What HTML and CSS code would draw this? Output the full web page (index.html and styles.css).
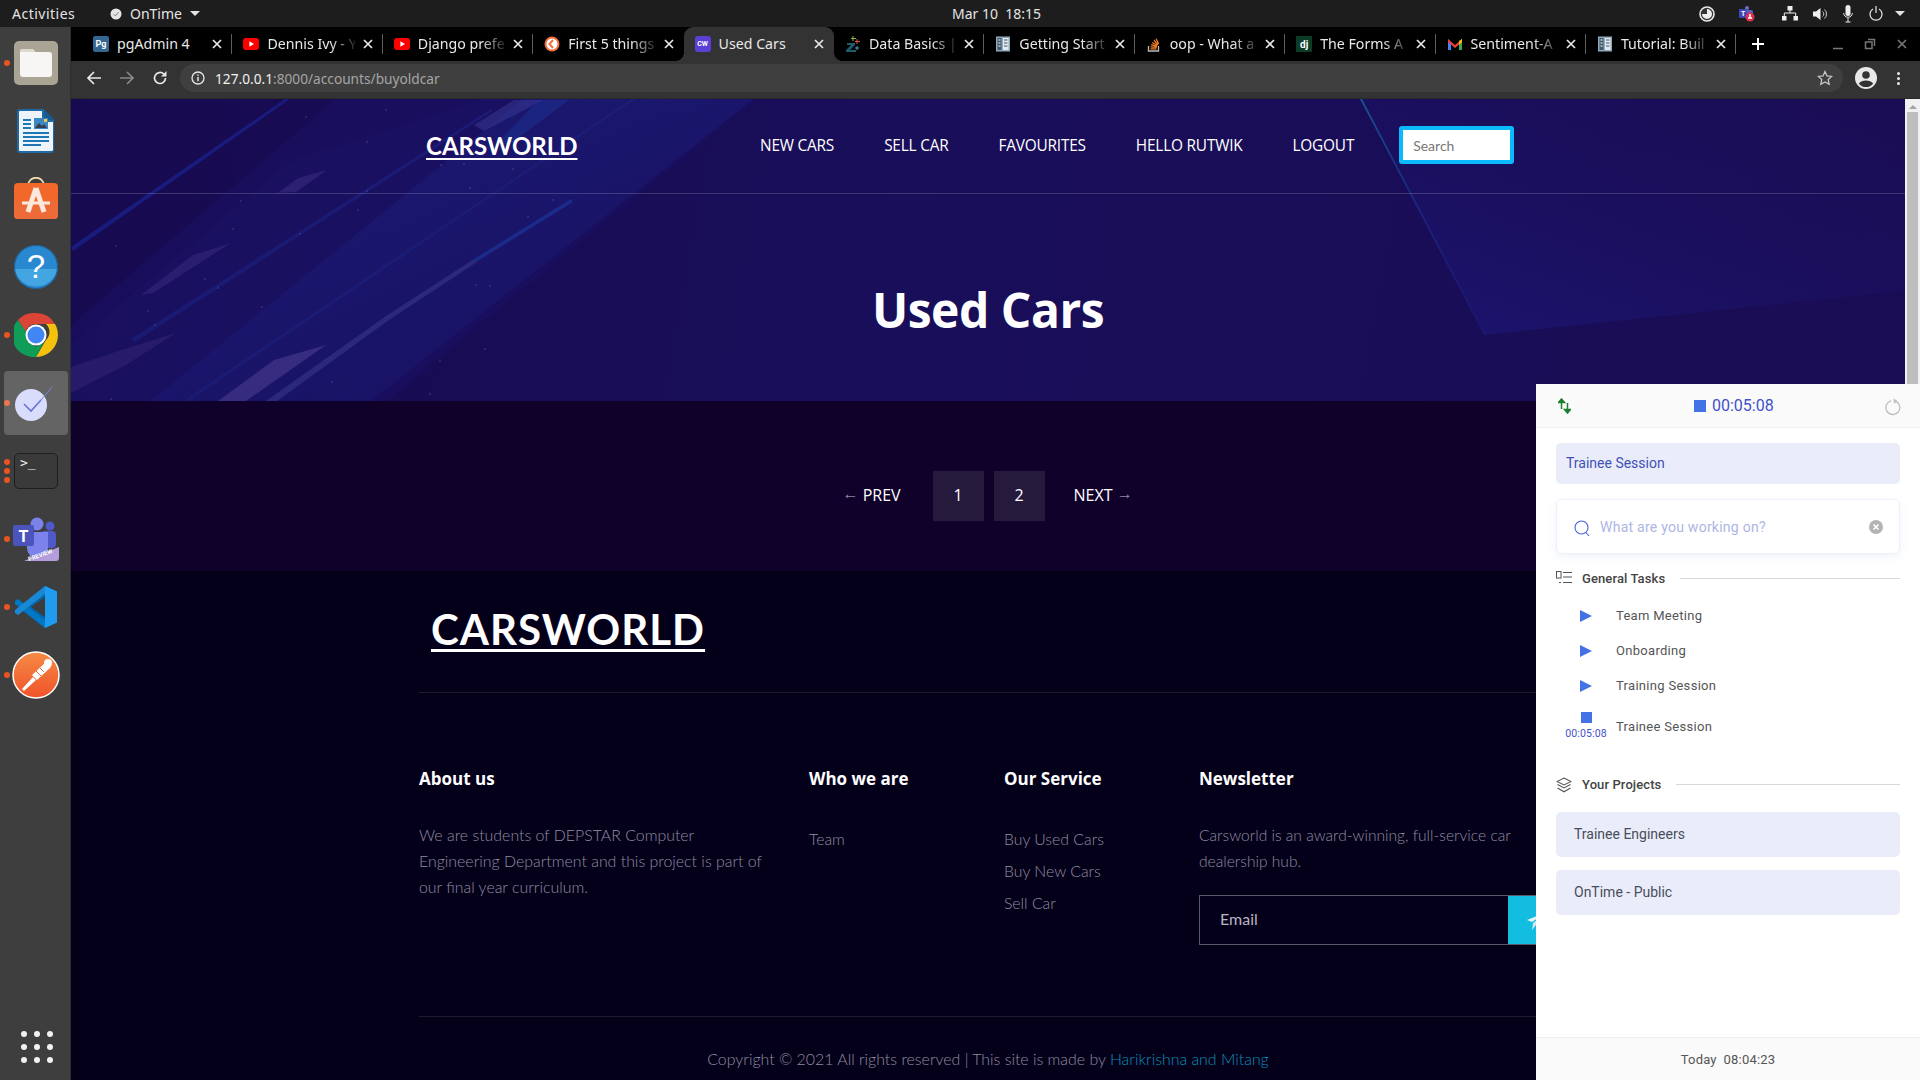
FILE: index.html
```html
<!DOCTYPE html>
<html lang="en">
<head>
  <meta charset="UTF-8">
  <title>Used Cars</title>
  <link rel="stylesheet" href="styles.css">
</head>
<body>
<svg class="sprites" width="0" height="0">
  <symbol id="yt" viewBox="0 0 16 16"><rect x="0" y="2" width="16" height="12" rx="3" fill="#f00"/><path d="M6.4 5.2 11 8l-4.6 2.8z" fill="#fff"/></symbol>
  <symbol id="docs" viewBox="0 0 16 16"><rect x="1" y="0.5" width="14" height="15" fill="#8fa9bb"/><rect x="2.5" y="2" width="4" height="12" fill="#40586a"/><rect x="8" y="2" width="5.5" height="12" fill="#e4ebf0"/><path d="M3.5 4h2M3.5 7h2M3.5 10h2" stroke="#fff" stroke-width="1.2"/><path d="M9 4h3.5M9 7h3.5M9 10h3.5" stroke="#40586a" stroke-width="1.2"/></symbol>
  <symbol id="close" viewBox="0 0 10 10"><path d="M1 1l8 8M9 1l-8 8" stroke="#e8e8e8" stroke-width="1.7" fill="none"/></symbol>
  <symbol id="play" viewBox="0 0 12 12"><path d="M0 0l12 6-12 6z" fill="#4272e4"/></symbol>
</svg>

<div class="desktop">
  <header class="topbar">
    <div class="topbar-left">
      <span class="activities">Activities</span>
      <span class="app-menu">
        <svg width="12" height="12" viewBox="0 0 12 12"><circle cx="6" cy="6" r="5.5" fill="#e6e6e6"/><path d="M3.5 6l2 2 3-4" stroke="#888" fill="none"/></svg>
        OnTime
        <i class="caret"></i>
      </span>
    </div>
    <span class="clock">Mar 10&nbsp; 18:15</span>
    <div class="tray">
      <svg class="tray-clock" width="16" height="16" viewBox="0 0 16 16"><circle cx="8" cy="8" r="7" fill="#333" stroke="#e8e8e8" stroke-width="1.6"/><path d="M8 3a5 5 0 1 1-5 5h5z" fill="#eee"/></svg>
      <svg class="tray-teams" width="18" height="18" viewBox="0 0 18 18"><circle cx="9" cy="3" r="2" fill="#6c71c4"/><rect x="7" y="5" width="8" height="8" rx="2" fill="#5b5fc7"/><rect x="1" y="4" width="8" height="9" rx="1" fill="#3f46b8"/><text x="3" y="11" class="tray-t">T</text><circle cx="12" cy="12" r="4.5" fill="#d9304c"/><path d="M12 9v4M10 13h4" stroke="#fff" stroke-width="1.6"/></svg>
      <svg class="tray-net" width="16" height="15" viewBox="0 0 16 15"><rect x="5.5" y="0" width="5" height="4.5" fill="#eee"/><rect x="0" y="10" width="4.5" height="4.5" fill="#eee"/><rect x="11.5" y="10" width="4.5" height="4.5" fill="#eee"/><path d="M8 4v3M2.3 10V7h11.4v3" stroke="#eee" fill="none"/></svg>
      <svg class="tray-vol" width="15" height="14" viewBox="0 0 15 14"><path d="M0 4.5h3L7.5 1v12L3 9.500H0z" fill="#eee"/><path d="M9.500 4.500a3 3 0 0 1 0 5M11.500 2.500a6 6 0 0 1 0 9" stroke="#ccc" fill="none"/></svg>
      <svg class="tray-mic" width="10" height="18" viewBox="0 0 10 18"><rect x="2.500" y="0" width="5" height="11" rx="2.500" fill="#eee"/><path d="M0.700 8a4.300 4.300 0 0 0 8.600 0M5 13v4M2.500 17h5" stroke="#eee" fill="none"/></svg>
      <svg class="tray-power" width="14" height="15" viewBox="0 0 14 15"><path d="M4 3a6 6 0 1 0 6 0M7 0v7" stroke="#e8e8e8" stroke-width="1.200" fill="none"/></svg>
      <i class="caret"></i>
    </div>
  </header>

  <div class="workspace">
    <nav class="dock">
      <div class="dock-item running">
        <svg width="44" height="44" viewBox="0 0 44 44"><rect width="44" height="44" rx="5" fill="#a9a494"/><path d="M6 11q0-3 3-3h9q2 0 3 3h14q3 0 3 3v19q0 3-3 3H9q-3 0-3-3z" fill="#f7f6f4"/><path d="M6 11q0-3 3-3h9q2 0 3 3z" fill="#dcd9d1"/></svg>
      </div>
      <div class="dock-item">
        <svg width="38" height="44" viewBox="0 0 38 44"><path d="M3 0h23l11 11v30q0 3-3 3H3q-3 0-3-3V3q0-3 3-3z" fill="#1f6aa5"/><path d="M3 2h22v11h11v28q0 1-2 1H3q-1 0-1-1V3q0-1 1-1z" fill="#eef5fa"/><path d="M27 0l11 11H27z" fill="#175a8f"/><path d="M6 11h8M6 15h8M6 19h8M6 24h26M6 28h26M6 32h26M6 36h18" stroke="#1f78b4" stroke-width="1.800"/><rect x="17" y="9" width="14" height="11" fill="#3a87c2"/><path d="M18 19l4-5 3 3 2-2 3 4z" fill="#333d4b"/><rect x="27" y="10" width="3" height="3" fill="#f5c542"/></svg>
      </div>
      <div class="dock-item">
        <svg width="44" height="44" viewBox="0 0 44 44"><path d="M14 9c0-11 16-11 16 0" stroke="#f0d9a8" stroke-width="1.800" fill="none"/><rect y="6" width="44" height="36" rx="4" fill="#f2682a"/><rect y="24" width="44" height="18" rx="4" fill="#ec6b37"/><path d="M22 11l8 24M22 11l-8 24" stroke="#fde8dc" stroke-width="5" fill="none"/><path d="M8 26h28" stroke="#fde8dc" stroke-width="3"/></svg>
      </div>
      <div class="dock-item">
        <svg width="44" height="44" viewBox="0 0 44 44"><circle cx="22" cy="22" r="22" fill="#2a88d0"/><path d="M0.500 24h43a22 22 0 0 1-43 0z" fill="#43a5e2"/><circle cx="22" cy="22" r="21.500" fill="none" stroke="#1c5f94"/><text x="22" y="33" text-anchor="middle" class="help-mark">?</text></svg>
      </div>
      <div class="dock-item running">
        <svg width="44" height="44" viewBox="0 0 44 44"><path d="M22 0a22 22 0 0 1 19 11H22a11 11 0 0 0-10.500 7.500L4 7a22 22 0 0 1 18-7z" fill="#db4437"/><path d="M41 11a22 22 0 0 1-19 33l10-17a11 11 0 0 0 0-16z" fill="#f4c20d"/><path d="M4 7l8 12 1 9 9 6 9-7-9 17A22 22 0 0 1 4 7z" fill="#0f9d58"/><circle cx="22" cy="22" r="10.500" fill="#fff"/><circle cx="22" cy="22" r="8.500" fill="#4285f4"/></svg>
      </div>
      <div class="dock-item running active">
        <svg width="44" height="44" viewBox="0 0 44 44"><circle cx="20" cy="24" r="16" fill="#d9dcfb"/><path d="M13 23l7 7 10-11" stroke="#6874d6" stroke-width="1.600" fill="none"/><path d="M30 19l11-13" stroke="#7a84d8" stroke-width="1" fill="none"/></svg>
      </div>
      <div class="dock-item running triple">
        <div class="terminal-icon">&gt;_</div>
      </div>
      <div class="dock-item running">
        <svg width="46" height="44" viewBox="0 0 46 44"><circle cx="24" cy="7" r="6.500" fill="#7b83eb"/><circle cx="37" cy="9" r="4.500" fill="#5059c9"/><rect x="28" y="14" width="15" height="17" rx="4" fill="#5059c9"/><path d="M14 15h21v16a10 10 0 0 1-21 0z" fill="#7b83eb"/><rect y="8" width="21" height="21" rx="2" fill="#4b53bc"/><text x="10.500" y="25" text-anchor="middle" class="teams-t">T</text><path d="M11 44l35-14v11q0 3-3 3z" fill="#b39ddb"/><text x="28" y="40" text-anchor="middle" class="teams-preview" transform="rotate(-20 28 40)">PREVIEW</text></svg>
      </div>
      <div class="dock-item running">
        <svg width="42" height="42" viewBox="0 0 42 42"><path d="M30 0l12 5.500v31L30 42 5 23l-3 0 28-23z" fill="#0065a9"/><path d="M30 0l12 5.500v31L30 42z" fill="#1f9cf0"/><path d="M0 15l3-2 27 21v8L0 18z" fill="#0078c6"/><path d="M0 27l3 2 27-21V0L0 24z" fill="#1b88d4"/><path d="M30 11L16 21l14 10z" fill="#3c3c3c"/></svg>
      </div>
      <div class="dock-item running">
        <svg width="48" height="48" viewBox="0 0 48 48"><defs><linearGradient id="pm" x1="0" y1="0" x2="0" y2="1"><stop offset="0" stop-color="#f58a45"/><stop offset="1" stop-color="#f0532a"/></linearGradient></defs><circle cx="24" cy="24" r="23" fill="url(#pm)" stroke="#fff" stroke-width="1.500"/><path d="M10 38l11-12 3 3-12 11zM20 24l14-13 5 5-14 13z" fill="#fff"/><circle cx="36" cy="12" r="4" fill="#fff"/><path d="M24 20l5 5M28 17l4 4" stroke="#f0622f"/></svg>
      </div>
      <div class="dock-apps">
        <i></i><i></i><i></i><i></i><i></i><i></i><i></i><i></i><i></i>
      </div>
    </nav>

    <div class="browser">
      <div class="tabstrip">
        <div class="tab"><span class="favicon fav-pg">Pg</span><span class="tab-title no-fade">pgAdmin 4</span><svg class="tab-x"><use href="#close"/></svg></div>
        <div class="tab"><svg class="favicon"><use href="#yt"/></svg><span class="tab-title">Dennis Ivy - Y</span><svg class="tab-x"><use href="#close"/></svg></div>
        <div class="tab"><svg class="favicon"><use href="#yt"/></svg><span class="tab-title">Django prefe</span><svg class="tab-x"><use href="#close"/></svg></div>
        <div class="tab no-sep"><svg class="favicon" viewBox="0 0 16 16"><circle cx="8" cy="8" r="7.500" fill="#f36f3c"/><circle cx="8" cy="8" r="5.500" fill="#fff"/><path d="M9 4L5.500 8 9 12" stroke="#f36f3c" stroke-width="2" fill="none"/></svg><span class="tab-title">First 5 things</span><svg class="tab-x"><use href="#close"/></svg></div>
        <div class="tab tab-active"><span class="favicon fav-cw">CW</span><span class="tab-title no-fade">Used Cars</span><svg class="tab-x"><use href="#close"/></svg></div>
        <div class="tab"><svg class="favicon" viewBox="0 0 16 16"><path d="M2 7h8v2L5 14h6v2H1v-2l5-5H2z" fill="#1d5a6c"/><path d="M8 0v5M6 2.500h5" stroke="#8ab54a"/><path d="M12 3v5M10 5.500h5" stroke="#e0533d"/><path d="M12 10v4M10 12h4" stroke="#3fa3c4"/></svg><span class="tab-title">Data Basics |</span><svg class="tab-x"><use href="#close"/></svg></div>
        <div class="tab"><svg class="favicon"><use href="#docs"/></svg><span class="tab-title">Getting Start</span><svg class="tab-x"><use href="#close"/></svg></div>
        <div class="tab"><svg class="favicon" viewBox="0 0 16 16"><path d="M2.500 10v5h10v-5" stroke="#bcbbbb" stroke-width="1.300" fill="none"/><path d="M4.500 12.800h6M4.700 10.800l6 .5M5.200 8.700l5.800 1.600M6.200 6.500l5.200 3M8 4.300l4 4.400M10 2.800l2.600 5" stroke="#f48024" stroke-width="1.300"/></svg><span class="tab-title">oop - What a</span><svg class="tab-x"><use href="#close"/></svg></div>
        <div class="tab"><span class="favicon fav-dj">dj</span><span class="tab-title">The Forms A</span><svg class="tab-x"><use href="#close"/></svg></div>
        <div class="tab"><svg class="favicon" viewBox="0 0 16 16"><path d="M1 3v11h3V7z" fill="#4285f4"/><path d="M15 3v11h-3V7z" fill="#34a853"/><path d="M1 3l7 6 7-6v3l-7 6-7-6z" fill="#ea4335"/><path d="M12 5l3-2v3l-3 3z" fill="#fbbc05"/></svg><span class="tab-title">Sentiment-A</span><svg class="tab-x"><use href="#close"/></svg></div>
        <div class="tab"><svg class="favicon"><use href="#docs"/></svg><span class="tab-title">Tutorial: Buil</span><svg class="tab-x"><use href="#close"/></svg></div>
        <svg class="tab-new" width="14" height="14" viewBox="0 0 14 14"><path d="M7 1v12M1 7h12" stroke="#fff" stroke-width="2"/></svg>
        <div class="win-controls">
          <svg width="12" height="12" viewBox="0 0 12 12"><path d="M1 10.500h10" stroke="#777" stroke-width="1.500"/></svg>
          <svg width="12" height="12" viewBox="0 0 12 12"><path d="M4 1.500h6.500V8M1.500 4h6.500v6.500H1.500z" stroke="#777" stroke-width="1.500" fill="none"/></svg>
          <svg width="12" height="12" viewBox="0 0 12 12"><path d="M2 2l8 8M10 2l-8 8" stroke="#777" stroke-width="1.700"/></svg>
        </div>
      </div>

      <div class="toolbar">
        <svg class="tool-btn" viewBox="0 0 16 16"><path d="M15 8H2M8 2L2 8l6 6" stroke="#e8e8e8" stroke-width="1.700" fill="none"/></svg>
        <svg class="tool-btn" viewBox="0 0 16 16"><path d="M1 8h13M8 2l6 6-6 6" stroke="#8a8a8a" stroke-width="1.700" fill="none"/></svg>
        <svg class="tool-btn" viewBox="0 0 16 16"><path d="M13.500 8a5.500 5.500 0 1 1-1.700-4" stroke="#e8e8e8" stroke-width="1.700" fill="none"/><path d="M14.500 1v5.500H9z" fill="#e8e8e8"/></svg>
        <div class="omnibox">
          <svg width="14" height="14" viewBox="0 0 14 14"><circle cx="7" cy="7" r="6" stroke="#e8e8e8" stroke-width="1.300" fill="none"/><path d="M7 6v4.200M7 3.400v1.300" stroke="#e8e8e8" stroke-width="1.500"/></svg>
          <span class="url"><b>127.0.0.1</b>:8000/accounts/buyoldcar</span>
          <svg class="star" width="16" height="16" viewBox="0 0 16 16"><path d="M8 1.500l2 4.400 4.700.5-3.500 3.200 1 4.700L8 11.900l-4.200 2.400 1-4.700L1.300 6.400 6 5.900z" stroke="#c8c8c8" stroke-width="1.300" fill="none"/></svg>
        </div>
        <svg class="avatar" width="22" height="22" viewBox="0 0 22 22"><circle cx="11" cy="11" r="11" fill="#e8e8e8"/><circle cx="11" cy="8" r="3.800" fill="#333"/><path d="M3.800 16.500c3-4 11.400-4 14.400 0a9 9 0 0 1-14.400 0z" fill="#333"/></svg>
        <div class="dots"><i></i><i></i><i></i></div>
      </div>

      <div class="viewport">
        <main class="site">
          <section class="hero">
            <svg class="hero-art" viewBox="0 0 1834 302" preserveAspectRatio="none">
              <defs>
                <linearGradient id="fan" x1="0" y1="1" x2="0.800" y2="0">
                  <stop offset="0" stop-color="#1f2090" stop-opacity=".45"/>
                  <stop offset="0.500" stop-color="#1c1a80" stop-opacity=".2"/>
                  <stop offset="1" stop-color="#1c1a80" stop-opacity="0"/>
                </linearGradient>
                <linearGradient id="edge" x1="0" y1="0" x2="0" y2="1">
                  <stop offset="0" stop-color="#1590b8" stop-opacity=".55"/>
                  <stop offset="0.450" stop-color="#1a4db0" stop-opacity=".35"/>
                  <stop offset="1" stop-color="#1b2a9c" stop-opacity=".1"/>
                </linearGradient>
                <linearGradient id="glow" x1="0" y1="0" x2="1" y2="1">
                  <stop offset="0" stop-color="#1c2b8e"/>
                  <stop offset="1" stop-color="#1a1064"/>
                </linearGradient>
                <linearGradient id="veil" x1="0" y1="0" x2="1" y2="0">
                  <stop offset="0" stop-color="#170a50" stop-opacity="0"/>
                  <stop offset="1" stop-color="#170a50" stop-opacity=".55"/>
                </linearGradient>
              </defs>
              <path d="M0 302V226L264 0h420L316 302z" fill="#1a1168" opacity=".45"/>
              <path d="M80 302 452 0h230L300 302z" fill="url(#glow)" opacity=".45"/>
              <path d="M0 246 220 62l190-62h60L100 302H0z" fill="#1e1a72" opacity=".2"/>
              <path d="M0 148 214 0h5L2 152z" fill="#1a2492" opacity=".7"/>
              <path d="M60 240 420 10l2 2L64 243z" fill="#1d2a90" opacity=".4"/>
              <path d="M112 302 560 0h5L118 302z" fill="#1d2a90" opacity=".3"/>
              <path d="M195 302l120-85 88-57 3 3-88 58-112 81z" fill="#3a3a8e" opacity=".55"/>
              <path d="M403 160 500 100l2 3-97 60z" fill="#1b3aa0" opacity=".6"/>
              <path d="M403 26 443 1h29L413 32z" fill="#4a4aa8" opacity=".35"/>
              <path d="M468 1h30l-60 45-12-2z" fill="#1e3a9e" opacity=".4"/>
              <path d="M0 268l50-17 55-17-50 32L0 294z" fill="#4a3586" opacity=".3"/>
              <path d="M147 302l56-41 52-15-80 56z" fill="#5a4a9c" opacity=".45"/>
              <path d="M70 196l52-40 38-12-78 50z" fill="#4c3f92" opacity=".3"/>
              <path d="M207 94l20-15 29-8-31 22z" fill="#4c3f92" opacity=".35"/>
              <path d="M1289 0 1413 236 1868 188 1834 0z" fill="url(#fan)"/>
              <path d="M1289 0 1413 236h2L1291 0z" fill="url(#edge)"/>
              <g fill="#a79fd0" opacity=".35">
                <circle cx="45" cy="147" r=".8"/><circle cx="170" cy="102" r=".8"/><circle cx="162" cy="130" r=".8"/><circle cx="134" cy="180" r=".8"/><circle cx="147" cy="189" r=".8"/><circle cx="77" cy="212" r=".8"/><circle cx="84" cy="226" r=".8"/><circle cx="191" cy="208" r=".8"/><circle cx="229" cy="135" r=".8"/><circle cx="287" cy="111" r=".8"/><circle cx="296" cy="92" r=".8"/><circle cx="235" cy="18" r=".8"/><circle cx="315" cy="11" r=".8"/><circle cx="296" cy="43" r=".8"/><circle cx="370" cy="66" r=".8"/><circle cx="393" cy="65" r=".8"/><circle cx="442" cy="70" r=".8"/><circle cx="399" cy="89" r=".8"/><circle cx="482" cy="101" r=".8"/><circle cx="457" cy="118" r=".8"/><circle cx="405" cy="186" r=".8"/><circle cx="419" cy="187" r=".8"/><circle cx="414" cy="250" r=".8"/><circle cx="369" cy="262" r=".8"/><circle cx="359" cy="295" r=".8"/><circle cx="261" cy="283" r=".8"/><circle cx="40" cy="300" r=".8"/>
              </g>
            </svg>
            <div class="hero-nav">
              <a class="site-logo">CARSWORLD</a>
              <div class="nav-links">
                <a>NEW CARS</a><a>SELL CAR</a><a>FAVOURITES</a><a>HELLO RUTWIK</a><a>LOGOUT</a>
              </div>
              <div class="site-search">Search</div>
            </div>
            <h1 class="hero-title">Used Cars</h1>
          </section>

          <section class="pager-band">
            <div class="pager">
              <a class="pager-arrow"><span class="arrow-glyph">&larr;</span> PREV</a>
              <a class="page-box">1</a>
              <a class="page-box">2</a>
              <a class="pager-arrow next">NEXT <span class="arrow-glyph">&rarr;</span></a>
            </div>
          </section>

          <footer class="site-footer">
            <div class="footer-logo-row"><a class="footer-logo">CARSWORLD</a></div>
            <div class="footer-cols">
              <div>
                <h4>About us</h4>
                <p>We are students of DEPSTAR Computer<br>Engineering Department and this project is part of<br>our final year curriculum.</p>
              </div>
              <div>
                <h4>Who we are</h4>
                <ul><li>Team</li></ul>
              </div>
              <div>
                <h4>Our Service</h4>
                <ul><li>Buy Used Cars</li><li>Buy New Cars</li><li>Sell Car</li></ul>
              </div>
              <div class="newsletter">
                <h4>Newsletter</h4>
                <p>Carsworld is an award-winning, full-service car<br>dealership hub.</p>
                <div class="email-box">
                  <span class="email-text">Email</span>
                  <div class="email-send"><svg width="20" height="20" viewBox="0 0 20 20"><path d="M20 2 0 10l5 2z" fill="#e6f4f8"/><path d="M20 2 6 13l-1 7 4-5z" fill="#cfe6ee"/></svg></div>
                </div>
              </div>
            </div>
            <div class="copyright">Copyright &copy; 2021 All rights reserved | This site is made by <a>Harikrishna and Mitang</a></div>
          </footer>
        </main>
        <div class="scrollbar"><i class="scroll-up"></i><div class="scroll-thumb"></div></div>
      </div>
    </div>
  </div>

  <aside class="ontime">
    <div class="ot-head">
      <svg class="ot-sync" width="13" height="16" viewBox="0 0 13 16"><path d="M3.500 11V2M0.500 4.500l3-3.500 3 3.500zM9.500 5v9M6.500 11.500l3 3.500 3-3.500z" stroke="#1a7f2e" stroke-width="1.500" fill="#1a7f2e"/></svg>
      <div class="ot-timer"><i class="stop-big"></i><span>00:05:08</span></div>
      <svg class="ot-reload" width="17" height="18" viewBox="0 0 17 18"><path d="M12 3.300a7 7 0 1 1-5-.5" stroke="#bdbdbd" stroke-width="1.300" fill="none"/><path d="M9.500 0.500l4 2.500-3.500 2.800z" fill="#bdbdbd"/></svg>
    </div>
    <div class="ot-body">
      <div class="ot-current">Trainee Session</div>
      <div class="ot-search">
        <svg width="17" height="17" viewBox="0 0 17 17"><circle cx="7.500" cy="7.500" r="6.500" stroke="#4a63d8" stroke-width="1.100" fill="none"/><path d="M12 12.500l3 3.500" stroke="#4a63d8" stroke-width="1.100"/></svg>
        <span class="ot-placeholder">What are you working on?</span>
        <svg class="ot-clear" width="14" height="14" viewBox="0 0 14 14"><circle cx="7" cy="7" r="7" fill="#b4b4b4"/><path d="M4.500 4.500l5 5M9.500 4.500l-5 5" stroke="#fff" stroke-width="1.600"/></svg>
      </div>
      <div class="ot-section tasks-head">
        <svg width="16" height="14" viewBox="0 0 16 14"><rect x="0.500" y="0.500" width="4.500" height="6.500" stroke="#555" fill="none"/><path d="M7 1.500h9M7 6h9M7 11.500h9M3 11.500h2" stroke="#555" stroke-width="1.200"/></svg>
        <span>General Tasks</span><hr>
      </div>
      <div class="ot-task"><span class="task-ctl"><svg width="12" height="12"><use href="#play"/></svg></span><span>Team Meeting</span></div>
      <div class="ot-task"><span class="task-ctl"><svg width="12" height="12"><use href="#play"/></svg></span><span>Onboarding</span></div>
      <div class="ot-task"><span class="task-ctl"><svg width="12" height="12"><use href="#play"/></svg></span><span>Training Session</span></div>
      <div class="ot-task running-task"><span class="task-ctl"><i class="stop-small"></i><small>00:05:08</small></span><span>Trainee Session</span></div>
      <div class="ot-section projects-head">
        <svg width="16" height="16" viewBox="0 0 16 16"><path d="M8 1l7 3.500L8 8 1 4.500z" stroke="#555" stroke-width="1.100" fill="none"/><path d="M1.500 7.500 8 11l6.500-3.500M1.500 11 8 14.800l6.500-3.800" stroke="#555" stroke-width="1.100" fill="none"/></svg>
        <span>Your Projects</span><hr>
      </div>
      <div class="ot-project">Trainee Engineers</div>
      <div class="ot-project">OnTime - Public</div>
    </div>
    <div class="ot-foot">Today&nbsp; 08:04:23</div>
  </aside>
</div>
</body>
</html>
```

FILE: styles.css
```css
* {
  box-sizing: border-box;
}

html, body {
  margin: 0;
  width: 1920px;
  height: 1080px;
  overflow: hidden;
}

body {
  font-family: "Noto Sans", sans-serif;
  background-color: #000;
}

.sprites {
  position: absolute;
}

.desktop {
  position: relative;
  width: 1920px;
  height: 1080px;
  display: flex;
  flex-direction: column;
  overflow: hidden;
}

/* top bar */
.topbar {
  height: 27px;
  flex: none;
  display: flex;
  align-items: center;
  background-color: #1d1d1d;
  color: #e4e4e4;
  font-size: 14px;
}

.topbar-left {
  width: 952px;
  display: flex;
  align-items: center;
  padding-left: 12px;
}

.activities {
  width: 98px;
  letter-spacing: 0.5px;
}

.app-menu {
  display: flex;
  align-items: center;
  gap: 8px;
}

.caret {
  display: inline-block;
  border-left: 5px solid transparent;
  border-right: 5px solid transparent;
  border-top: 5px solid #e4e4e4;
}

.clock {
  width: 90px;
  font-size: 14px;
  white-space: nowrap;
}

.tray {
  margin-left: auto;
  display: flex;
  align-items: center;
  padding-right: 15px;
}

.tray-clock { margin-right: 23px; }
.tray-teams { margin-right: 26px; }
.tray-net { margin-right: 15px; }
.tray-vol { margin-right: 15px; }
.tray-mic { margin-right: 16px; }
.tray-power { margin-right: 12px; }

.tray-t {
  font-family: "Roboto", sans-serif;
  font-size: 7px;
  font-weight: 700;
  fill: #fff;
}

/* dock */
.workspace {
  flex: 1;
  display: flex;
  min-height: 0;
}

.dock {
  width: 71px;
  flex: none;
  display: flex;
  flex-direction: column;
  padding-top: 2px;
  background-color: #3e3e3e;
  border-right: 1px solid #2f2f2f;
}

.dock-item {
  position: relative;
  height: 68px;
  flex: none;
  display: flex;
  align-items: center;
  justify-content: center;
  padding-left: 2px;
}

.dock-item.running::before {
  content: "";
  position: absolute;
  left: 4px;
  top: 31px;
  width: 6px;
  height: 6px;
  border-radius: 50%;
  background-color: #e95420;
}

.dock-item.triple::before {
  top: 22px;
  box-shadow: 0 9px 0 #e95420, 0 18px 0 #e95420;
}

.dock-item.active::after {
  content: "";
  position: absolute;
  left: 4px;
  top: 2px;
  width: 64px;
  height: 64px;
  border-radius: 4px;
  background-color: rgba(255, 255, 255, 0.2);
}

.dock-item.active svg {
  position: relative;
  left: -3px;
  z-index: 1;
}

.help-mark {
  font-family: "Liberation Sans", sans-serif;
  font-size: 33px;
  fill: #fff;
}

.teams-t {
  font-family: "Roboto", sans-serif;
  font-size: 16px;
  font-weight: 700;
  fill: #fff;
}

.teams-preview {
  font-family: "Roboto", sans-serif;
  font-size: 6px;
  font-weight: 700;
  fill: #fff;
}

.terminal-icon {
  width: 44px;
  height: 36px;
  background-color: #3a3a3a;
  border: 1px solid #1e1e1e;
  border-radius: 5px;
  padding: 1px 5px;
  color: #f0f0f0;
  font-family: "DejaVu Sans Mono", monospace;
  font-size: 13px;
  line-height: 16px;
}

.dock-apps {
  margin-top: auto;
  margin-bottom: 17px;
  margin-left: 21px;
  display: grid;
  grid-template-columns: repeat(3, 6px);
  gap: 7px;
}

.dock-apps i {
  width: 6px;
  height: 6px;
  border-radius: 50%;
  background-color: #f2f2f2;
}

/* browser chrome */
.browser {
  flex: 1;
  min-width: 0;
  display: flex;
  flex-direction: column;
}

.tabstrip {
  height: 34px;
  flex: none;
  display: flex;
  align-items: stretch;
  padding-left: 11px;
  background-color: #000;
}

.tab {
  position: relative;
  width: 150.4px;
  flex: none;
  display: flex;
  align-items: center;
  gap: 8px;
  padding: 0 10px 0 11px;
  color: #e8e8e8;
  font-size: 14.2px;
}

.tab::after {
  content: "";
  position: absolute;
  right: 0;
  top: 7px;
  height: 20px;
  width: 1px;
  background-color: #5e5e5e;
}

.tab.no-sep::after {
  display: none;
}

.tab-active {
  background-color: #333;
  border-radius: 9px 9px 0 0;
}

.tab-active::before,
.tab-active::after {
  content: "";
  position: absolute;
  top: auto;
  bottom: 0;
  width: 8px;
  height: 8px;
  background-color: transparent;
}

.tab-active::before {
  left: -8px;
  right: auto;
  background-image: radial-gradient(circle at 0 0, #000 7.5px, #333 8px);
}

.tab-active::after {
  right: -8px;
  background-image: radial-gradient(circle at 100% 0, #000 7.5px, #333 8px);
}

.favicon {
  width: 16px;
  height: 16px;
  flex: none;
}

.fav-pg, .fav-cw, .fav-dj {
  display: flex;
  align-items: center;
  justify-content: center;
  font-family: "Roboto", sans-serif;
  font-size: 9px;
  font-weight: 700;
  color: #fff;
}

.fav-pg { background-color: #336791; border-radius: 2px; }
.fav-cw { background-color: #5b3fd6; border-radius: 3px; font-size: 7px; }
.fav-dj { background-color: #0c3c26; font-size: 10px; }

.tab-title {
  flex: 1;
  min-width: 0;
  margin-bottom: 2px;
  white-space: nowrap;
  -webkit-mask-image: linear-gradient(to right, #000 72%, rgba(0, 0, 0, 0.15) 100%);
  mask-image: linear-gradient(to right, #000 72%, rgba(0, 0, 0, 0.15) 100%);
}

.tab-title.no-fade {
  -webkit-mask-image: none;
  mask-image: none;
}

.tab-x {
  width: 10px;
  height: 10px;
  flex: none;
}

.tab-new {
  margin: 10px 0 0 15px;
}

.win-controls {
  margin-left: auto;
  display: flex;
  align-items: center;
  gap: 20px;
  padding-right: 12px;
}

.toolbar {
  height: 38px;
  flex: none;
  display: flex;
  align-items: center;
  padding: 0 0 3px 15px;
  background-color: #333;
  border-bottom: 1px solid #2a2a2a;
}

.tool-btn {
  width: 16px;
  height: 16px;
  margin-right: 17px;
  flex: none;
}

.omnibox {
  width: 1663px;
  height: 28px;
  margin-left: -5px;
  flex: none;
  display: flex;
  align-items: center;
  gap: 10px;
  padding: 0 10px 0 11px;
  border-radius: 14px;
  background-color: #3f3f3f;
  color: #a5a5a5;
  font-size: 13.7px;
}

.url b {
  font-weight: 400;
  color: #f0f0f0;
}

.star {
  margin-left: auto;
}

.avatar {
  margin-left: 12px;
}

.dots {
  margin-left: 20px;
  display: flex;
  flex-direction: column;
  gap: 2px;
}

.dots i {
  width: 3px;
  height: 3px;
  border-radius: 50%;
  background-color: #e8e8e8;
}

/* the site */
.viewport {
  flex: 1;
  min-height: 0;
  display: flex;
}

.site {
  flex: 1;
  min-width: 0;
  overflow: hidden;
  background-color: #10012a;
  font-family: "Lato", sans-serif;
  color: #fff;
}

.hero {
  position: relative;
  height: 302px;
  background: linear-gradient(100deg, #170a50 0%, #190e5a 45%, #1a0c54 100%);
}

.hero-art {
  position: absolute;
  left: 0;
  top: 0;
  width: 100%;
  height: 100%;
}

.hero-nav {
  position: relative;
  height: 95px;
  display: flex;
  align-items: center;
  padding: 0 0 2px 355px;
  border-bottom: 1px solid rgba(255, 255, 255, 0.17);
}

.site-logo {
  width: 334px;
  font-size: 24px;
  font-weight: 700;
  text-decoration: underline;
  text-decoration-thickness: 2px;
  text-underline-offset: 3px;
}

.nav-links {
  display: flex;
  gap: 50px;
  font-family: "Open Sans", sans-serif;
  font-size: 15.4px;
  font-weight: 500;
  letter-spacing: -0.2px;
}

.site-search {
  width: 115px;
  height: 38px;
  margin-left: 45px;
  padding: 0 10px;
  display: flex;
  align-items: center;
  background-color: #fff;
  border: 4px solid #0bb9ff;
  border-radius: 3px;
  color: #777;
  font-size: 14px;
}

.hero-title {
  position: relative;
  margin: 0;
  padding-top: 85px;
  text-align: center;
  font-family: "Open Sans", sans-serif;
  font-size: 48px;
  line-height: 62px;
  font-weight: 700;
  letter-spacing: -0.5px;
}

.pager-band {
  height: 170px;
  padding-top: 70px;
}

.pager {
  display: flex;
  justify-content: center;
  align-items: center;
  padding-left: 29px;
}

.pager-arrow {
  width: 90px;
  padding-bottom: 3px;
  font-family: "Open Sans", sans-serif;
  font-size: 16px;
  font-weight: 500;
}

.pager-arrow.next {
  width: 89px;
  margin-left: 29px;
}

.arrow-glyph {
  font-size: 16px;
  color: #8d86a5;
  position: relative;
  top: -2px;
}

.page-box {
  width: 51px;
  height: 50px;
  margin-right: 10px;
  padding-bottom: 2px;
  display: flex;
  align-items: center;
  justify-content: center;
  background-color: #251a3c;
  font-family: "Open Sans", sans-serif;
  font-size: 16px;
  font-weight: 500;
}

.page-box + .page-box {
  margin-right: 0;
}

.site-footer {
  height: 509px;
  padding-left: 348px;
  background-color: #05001a;
}

.footer-logo-row {
  height: 122px;
  padding: 28px 0 0 12px;
  border-bottom: 1px solid #1d1a30;
}

.footer-logo {
  font-size: 42px;
  font-weight: 700;
  line-height: 60px;
  letter-spacing: 1px;
  text-decoration: underline;
  text-decoration-thickness: 3px;
  text-underline-offset: 4px;
}

.footer-cols {
  height: 324px;
  display: grid;
  grid-template-columns: 390px 195px 195px 1fr;
  padding-top: 74px;
  border-bottom: 1px solid #1d1a30;
}

.footer-cols h4 {
  margin: 0 0 31px;
  font-family: "Open Sans", sans-serif;
  font-size: 17px;
  line-height: 24px;
  font-weight: 700;
}

.footer-cols p {
  margin: 0;
  font-size: 15.9px;
  font-weight: 300;
  line-height: 26px;
  color: #8f8da0;
  white-space: nowrap;
}

.newsletter p {
  font-size: 15.6px;
}

.footer-cols ul {
  margin: 0;
  padding: 4px 0 0;
  list-style: none;
  font-size: 15.8px;
  font-weight: 300;
  color: #8f8da0;
}

.footer-cols li {
  height: 32px;
  line-height: 26px;
}

.email-box {
  width: 360px;
  height: 50px;
  margin-top: 21px;
  display: flex;
  align-items: stretch;
  border: 1px solid #5a5868;
}

.email-text {
  flex: 1;
  padding: 0 20px;
  line-height: 46px;
  font-size: 16px;
  color: #b8b6c0;
}

.email-send {
  width: 50px;
  flex: none;
  display: flex;
  align-items: center;
  padding-left: 19px;
  background-color: #12bde0;
}

.copyright {
  padding-top: 30px;
  padding-right: 348px;
  text-align: center;
  font-size: 15.9px;
  font-weight: 300;
  line-height: 24px;
  color: #8f8da0;
}

.copyright a {
  color: #0a8fb8;
}

.scrollbar {
  width: 15px;
  flex: none;
  padding: 0 2px;
  background-color: #f1f1f1;
}

.scroll-up {
  display: block;
  margin: 6px auto 3px;
  width: 0;
  border-left: 4px solid transparent;
  border-right: 4px solid transparent;
  border-bottom: 4px solid #a3a3a3;
}

.scroll-thumb {
  height: 300px;
  background-color: #bebebe;
}

/* OnTime window, floats over the browser */
.ontime {
  position: absolute;
  right: 0;
  top: 384px;
  width: 384px;
  height: 696px;
  display: flex;
  flex-direction: column;
  background-color: #fff;
  font-family: "Roboto", sans-serif;
}

.ot-head {
  height: 44px;
  flex: none;
  display: flex;
  align-items: center;
  padding: 0 19px 0 22px;
  background-color: #fafafa;
  border-bottom: 1px solid #eef0f8;
}

.ot-timer {
  margin-left: 123px;
  display: flex;
  align-items: center;
  gap: 6px;
  color: #3f51c9;
  font-size: 16px;
}

.stop-big {
  width: 12px;
  height: 12px;
  background-color: #4272e4;
}

.ot-reload {
  margin-left: auto;
  margin-top: 3px;
}

.ot-body {
  flex: 1;
  padding: 15px 20px 0;
}

.ot-current {
  height: 41px;
  padding-left: 10px;
  line-height: 41px;
  font-size: 14px;
  color: #3f51b5;
  background-color: #eaedf9;
  border-radius: 5px;
}

.ot-search {
  height: 55px;
  margin-top: 15px;
  display: flex;
  align-items: center;
  padding: 0 16px 0 17px;
  background-color: #fff;
  border: 1px solid #eef0f9;
  border-radius: 6px;
  box-shadow: 0 3px 10px rgba(120, 135, 210, 0.1);
}

.ot-search > svg:first-child {
  margin-top: 4px;
}

.ot-placeholder {
  margin-left: 9px;
  font-size: 14px;
  letter-spacing: 0.25px;
  color: #adb6e6;
}

.ot-clear {
  margin-left: auto;
}

.ot-section {
  display: flex;
  align-items: center;
  font-size: 13px;
  font-weight: 500;
  letter-spacing: 0.1px;
  color: #444;
}

.ot-section span {
  margin-left: 10px;
  white-space: nowrap;
}

.ot-section hr {
  flex: 1;
  margin: 0 0 0 15px;
  border: 0;
  border-top: 1px solid #d8d8d8;
}

.tasks-head {
  margin-top: 16px;
  height: 16px;
}

.projects-head {
  margin-top: 26px;
  height: 17px;
}

.ot-task {
  height: 35px;
  display: flex;
  align-items: center;
  font-size: 13px;
  letter-spacing: 0.3px;
  color: #555;
}

.tasks-head + .ot-task {
  margin-top: 12px;
}

.task-ctl {
  width: 60px;
  flex: none;
  display: flex;
  flex-direction: column;
  align-items: center;
}

.running-task {
  height: 47px;
}

.stop-small {
  width: 11px;
  height: 11px;
  margin-top: -2px;
  background-color: #4272e4;
}

.task-ctl small {
  margin-top: 4px;
  font-size: 10.5px;
  letter-spacing: 0.1px;
  color: #3f51c9;
}

.ot-project {
  height: 45px;
  margin-top: 13px;
  padding-left: 18px;
  line-height: 45px;
  font-size: 14px;
  color: #474d5c;
  background-color: #eaedf9;
  border-radius: 5px;
}

.projects-head + .ot-project {
  margin-top: 19px;
}

.ot-foot {
  height: 43px;
  flex: none;
  text-align: center;
  line-height: 43px;
  font-size: 13px;
  letter-spacing: 0.2px;
  color: #555;
  background-color: #fafafa;
  border-top: 1px solid #eef0f8;
}
```
